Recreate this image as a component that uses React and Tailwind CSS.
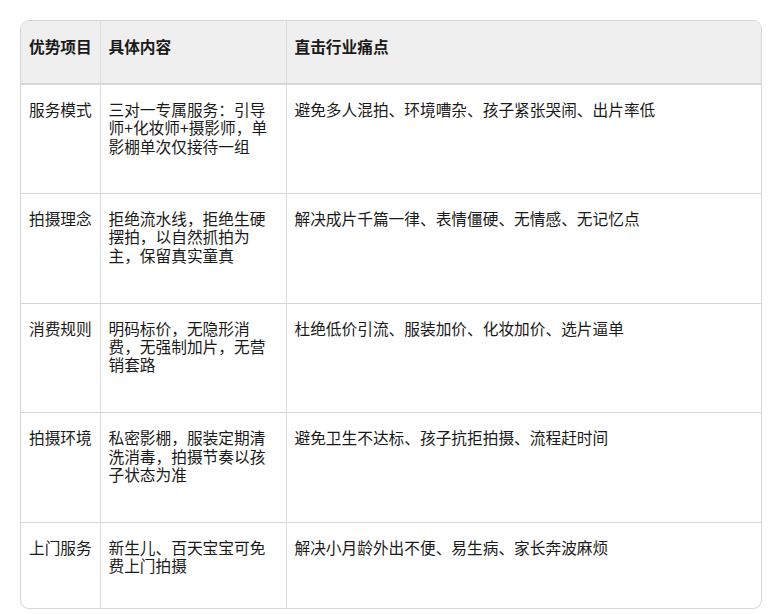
const rows = [
  {
    item: '服务模式',
    content: '三对一专属服务：引导师+化妆师+摄影师，单影棚单次仅接待一组',
    pain: '避免多人混拍、环境嘈杂、孩子紧张哭闹、出片率低',
  },
  {
    item: '拍摄理念',
    content: '拒绝流水线，拒绝生硬摆拍，以自然抓拍为主，保留真实童真',
    pain: '解决成片千篇一律、表情僵硬、无情感、无记忆点',
  },
  {
    item: '消费规则',
    content: '明码标价，无隐形消费，无强制加片，无营销套路',
    pain: '杜绝低价引流、服装加价、化妆加价、选片逼单',
  },
  {
    item: '拍摄环境',
    content: '私密影棚，服装定期清洗消毒，拍摄节奏以孩子状态为准',
    pain: '避免卫生不达标、孩子抗拒拍摄、流程赶时间',
  },
  {
    item: '上门服务',
    content: '新生儿、百天宝宝可免费上门拍摄',
    pain: '解决小月龄外出不便、易生病、家长奔波麻烦',
  },
];

export default function App() {
  return (
    <div
      className="min-h-[614px] bg-white pt-[20px] pl-[20px]"
      style={{ fontFamily: '"Noto Sans CJK SC", "Noto Sans", sans-serif' }}
    >
      <div className="w-[742px] overflow-hidden rounded-[9px] border border-[#d6d6d6]">
        <table className="w-full table-fixed border-collapse text-[15.7px] leading-[18.3px] text-[#1a1a1a]">
          <colgroup>
            <col className="w-[79px]" />
            <col className="w-[186px]" />
            <col />
          </colgroup>
          <thead>
            <tr className="h-[63px] border-b-2 border-[#d6d6d6] bg-[#efefef]">
              <th className="border-r border-[#dcdcdc] pl-2 pr-1 pt-[17px] text-left align-top font-bold">优势项目</th>
              <th className="border-r border-[#dcdcdc] pl-2 pr-2 pt-[17px] text-left align-top font-bold">具体内容</th>
              <th className="pl-2 pr-2 pt-[17px] text-left align-top font-bold">直击行业痛点</th>
            </tr>
          </thead>
          <tbody>
            {rows.map((r, i) => (
              <tr
                key={r.item}
                className={i === rows.length - 1 ? 'h-[86px]' : 'h-[109.6px] border-b border-[#d6d6d6]'}
              >
                <td className="border-r border-[#dcdcdc] pl-2 pr-1 pt-[16px] align-top">{r.item}</td>
                <td className="border-r border-[#dcdcdc] pl-2 pr-2 pt-[16px] align-top">{r.content}</td>
                <td className="pl-2 pr-2 pt-[16px] align-top">{r.pain}</td>
              </tr>
            ))}
          </tbody>
        </table>
      </div>
    </div>
  );
}
